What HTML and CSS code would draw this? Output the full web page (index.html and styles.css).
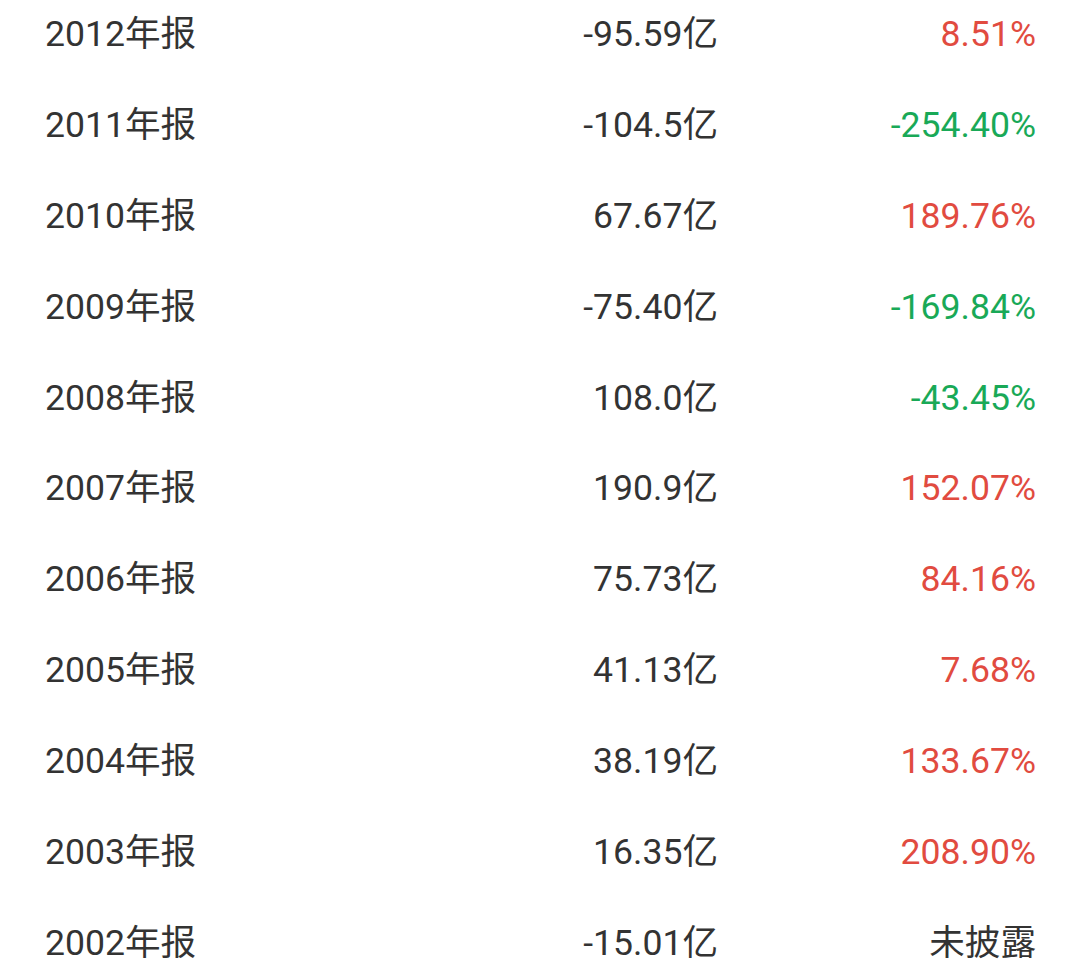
FILE: index.html
```html
<!DOCTYPE html>
<html lang="zh">
<head>
<meta charset="utf-8">
<link rel="stylesheet" href="styles.css">
</head>
<body>
<div class="list">
  <div class="row"><span class="label">2012年报</span><span class="val">-95.59亿</span><span class="pct up">8.51%</span></div>
  <div class="row"><span class="label">2011年报</span><span class="val">-104.5亿</span><span class="pct down">-254.40%</span></div>
  <div class="row"><span class="label">2010年报</span><span class="val">67.67亿</span><span class="pct up">189.76%</span></div>
  <div class="row"><span class="label">2009年报</span><span class="val">-75.40亿</span><span class="pct down">-169.84%</span></div>
  <div class="row"><span class="label">2008年报</span><span class="val">108.0亿</span><span class="pct down">-43.45%</span></div>
  <div class="row"><span class="label">2007年报</span><span class="val">190.9亿</span><span class="pct up">152.07%</span></div>
  <div class="row"><span class="label">2006年报</span><span class="val">75.73亿</span><span class="pct up">84.16%</span></div>
  <div class="row"><span class="label">2005年报</span><span class="val">41.13亿</span><span class="pct up">7.68%</span></div>
  <div class="row"><span class="label">2004年报</span><span class="val">38.19亿</span><span class="pct up">133.67%</span></div>
  <div class="row"><span class="label">2003年报</span><span class="val">16.35亿</span><span class="pct up">208.90%</span></div>
  <div class="row"><span class="label">2002年报</span><span class="val">-15.01亿</span><span class="pct na">未披露</span></div>
</div>
</body>
</html>
```

FILE: styles.css
```css
html, body {
  margin: 0;
  padding: 0;
  background: #ffffff;
}
body {
  font-family: Roboto, "Noto Sans CJK SC", sans-serif;
  font-size: 35.6px;
  color: #333333;
  overflow: hidden;
}
.list {
  margin-top: -15px;
}
.row {
  display: grid;
  grid-template-columns: 373px 300px 318px;
  align-items: baseline;
  align-content: center;
  height: 90.9px;
  padding: 0 44px 0 45px;
}
.label {
  text-align: left;
  white-space: nowrap;
}
.val {
  text-align: right;
  white-space: nowrap;
}
.pct {
  text-align: right;
  white-space: nowrap;
}
.up { color: #e14b40; }
.down { color: #19a957; }
.na { color: #333333; }
```
